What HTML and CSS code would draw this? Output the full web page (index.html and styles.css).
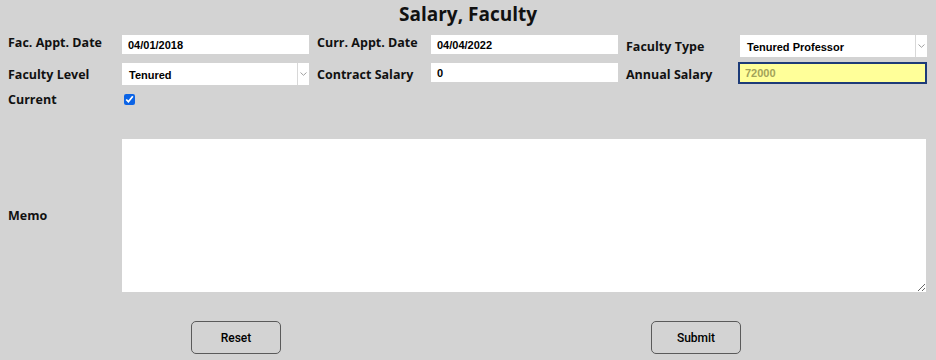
FILE: index.html
```html
<!DOCTYPE html>
<html>
<head>
<meta charset="utf-8">
<link rel="stylesheet" href="styles.css">
</head>
<body>
<div class="page">
  <h1 class="title">Salary, Faculty</h1>
  <div class="form">
    <label class="lbl lbl-top">Fac. Appt. Date</label>
    <input class="txt" type="text" value="04/01/2018">
    <label class="lbl lbl-top">Curr. Appt. Date</label>
    <input class="txt" type="text" value="04/04/2022">
    <label class="lbl">Faculty Type</label>
    <div class="sel"><span class="sel-val">Tenured Professor</span><span class="sel-btn"><svg width="7" height="4" viewBox="0 0 7 4"><path d="M0.5 0.5 L3.5 3.3 L6.5 0.5" fill="none" stroke="#a0a0a0" stroke-width="1"/></svg></span></div>

    <label class="lbl">Faculty Level</label>
    <div class="sel"><span class="sel-val">Tenured</span><span class="sel-btn"><svg width="7" height="4" viewBox="0 0 7 4"><path d="M0.5 0.5 L3.5 3.3 L6.5 0.5" fill="none" stroke="#a0a0a0" stroke-width="1"/></svg></span></div>
    <label class="lbl">Contract Salary</label>
    <input class="txt" type="text" value="0">
    <label class="lbl">Annual Salary</label>
    <input class="txt ro" type="text" value="72000" readonly>

    <label class="lbl lbl-cur">Current</label>
    <div class="chk-cell"><input class="chk" type="checkbox" checked></div>

    <label class="lbl memo-lbl">Memo</label>
    <textarea class="memo"></textarea>
  </div>
  <div class="actions">
    <button class="btn">Reset</button>
    <button class="btn">Submit</button>
  </div>
</div>
</body>
</html>
```

FILE: styles.css
```css
html, body {
  margin: 0;
  padding: 0;
  background: #d3d3d3;
}
.page {
  width: 936px;
  height: 360px;
  overflow: hidden;
  font-family: "Open Sans", "DejaVu Sans", sans-serif;
}
.title {
  margin: 0;
  padding-top: 1px;
  height: 33px;
  box-sizing: border-box;
  text-align: center;
  font-size: 19px;
  font-weight: bold;
  color: #111;
  line-height: 26px;
}
.form {
  display: grid;
  grid-template-columns: 106px 187px 106px 187px 106px 187px;
  grid-template-rows: 22px 22px 16px auto;
  column-gap: 8px;
  row-gap: 6px;
  padding-left: 8px;
  padding-top: 2px;
}
.lbl {
  font-size: 12.5px;
  font-weight: bold;
  color: #111;
  align-self: center;
  white-space: nowrap;
}
.lbl-top {
  align-self: start;
  line-height: 16px;
}
.txt {
  align-self: start;
  height: 19px;
  box-sizing: border-box;
  border: none;
  outline: none;
  margin: 0;
  padding: 0 6px;
  background: #fff;
  font-family: "Liberation Sans", Arial, sans-serif;
  font-weight: bold;
  font-size: 11px;
  color: #000;
  width: 187px;
}
.txt.ro {
  height: 22px;
  margin-top: -1px;
  margin-left: -2px;
  width: 189px;
  background: #ffff99;
  border: 2px solid #1d3b78;
  padding: 0 5px;
  color: #a3a35a;
}
.sel {
  display: flex;
  height: 22px;
  background: #fff;
  font-family: "Liberation Sans", Arial, sans-serif;
  font-weight: bold;
  font-size: 11px;
  color: #000;
}
.sel-val {
  flex: 1;
  padding-left: 7px;
  line-height: 24px;
}
.sel-btn {
  width: 11px;
  border-left: 1px solid #d8d8d8;
  display: flex;
  align-items: center;
  justify-content: center;
}
.chk-cell {
  display: flex;
  align-items: center;
}
.chk {
  margin: 0 0 0 2px;
  width: 11px;
  height: 11px;
  accent-color: #0b63e5;
}
.lbl-cur {
  grid-column: 1;
}
.memo-lbl {
  grid-column: 1;
  margin-top: 26px;
}
.memo {
  grid-column: 2 / 7;
  margin: 26px 0 0 0;
  width: 804px;
  height: 153px;
  box-sizing: border-box;
  border: none;
  outline: none;
  background: #fff;
  resize: both;
  display: block;
}
.actions {
  display: grid;
  grid-template-columns: 1fr 1fr;
  justify-items: center;
  padding: 0 10px 0 6px;
  margin-top: 29px;
}
.btn {
  width: 90px;
  height: 33px;
  background: #d3d3d3;
  border: 1px solid #5a5a5a;
  border-radius: 5px;
  font-family: Roboto, "Liberation Sans", sans-serif;
  font-weight: 500;
  font-size: 12px;
  color: #000;
  padding: 0;
}
```
